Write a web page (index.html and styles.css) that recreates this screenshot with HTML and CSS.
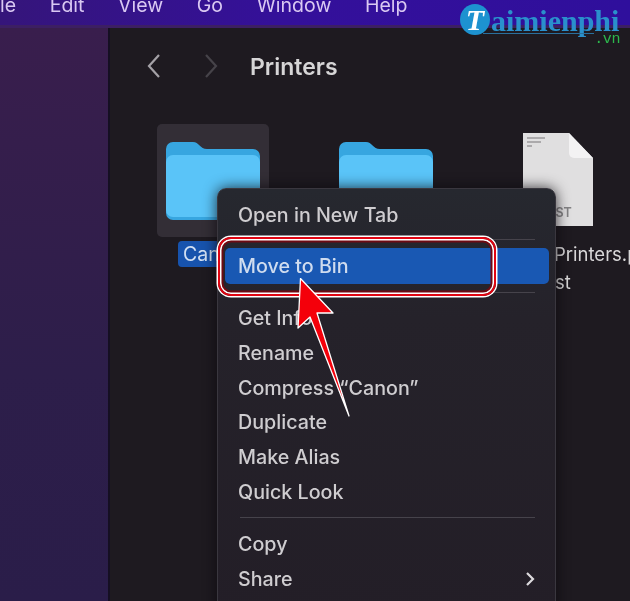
FILE: index.html
```html
<!DOCTYPE html>
<html lang="en">
<head>
<meta charset="utf-8">
<title>Printers</title>
<link rel="stylesheet" href="styles.css">
</head>
<body>
<div class="screen">
  <header class="menubar">
    <span class="m">le</span><span class="m">Edit</span><span class="m">View</span><span class="m">Go</span><span class="m">Window</span><span class="m">Help</span>
  </header>
  <div class="desktop">
    <aside class="sidebar"></aside>
    <main class="finder">
      <div class="toolbar">
        <svg class="nav" width="16" height="24" viewBox="0 0 16 24"><path d="M13 1 3 12l10 11" fill="none" stroke="#a4a1a6" stroke-width="2.2"/></svg>
        <svg class="nav nav-next" width="16" height="24" viewBox="0 0 16 24"><path d="M3 1l10 11L3 23" fill="none" stroke="#464349" stroke-width="2.2"/></svg>
        <h1 class="title">Printers</h1>
      </div>
      <div class="files">
        <div class="file file-a">
          <div class="thumb selected">
            <svg class="folder" width="94" height="78" viewBox="0 0 94 78"><path d="M0 7a7 7 0 0 1 7-7h20c6 0 7 7 14 7h46a7 7 0 0 1 7 7v57a7 7 0 0 1-7 7H7a7 7 0 0 1-7-7z" fill="#37a6e0"/><path d="M0 20a7 7 0 0 1 7-7h80a7 7 0 0 1 7 7v48a7 7 0 0 1-7 7H7a7 7 0 0 1-7-7z" fill="#5ac4f8"/></svg>
          </div>
          <span class="label">Can</span>
        </div>
        <div class="file file-b">
          <svg class="folder" width="94" height="78" viewBox="0 0 94 78"><path d="M0 7a7 7 0 0 1 7-7h20c6 0 7 7 14 7h46a7 7 0 0 1 7 7v57a7 7 0 0 1-7 7H7a7 7 0 0 1-7-7z" fill="#37a6e0"/><path d="M0 20a7 7 0 0 1 7-7h80a7 7 0 0 1 7 7v48a7 7 0 0 1-7 7H7a7 7 0 0 1-7-7z" fill="#5ac4f8"/></svg>
        </div>
        <div class="file file-c">
          <div class="doc">
            <svg width="72" height="93" viewBox="0 0 72 93"><path d="M1 0h46l24 25v68H1z" fill="#e0dfe0"/><path d="M47 0v20a5 5 0 0 0 5 5h19z" fill="#f3f2f3"/><path d="M5 5h18M5 9h14M5 13h5" stroke="#9a999b" stroke-width="1.5"/></svg>
            <span class="doc-tag">IST</span>
          </div>
          <span class="doc-name">Printers.p</span>
          <span class="doc-name doc-name-2">st</span>
        </div>
      </div>
    </main>
  </div>
  <div class="logo">
    <span class="logo-mark">T</span><span class="logo-text">aimienphi</span><span class="logo-vn">.vn</span>
  </div>
  <nav class="context">
    <div class="item item-first">Open in New Tab</div>
    <div class="sep"></div>
    <div class="item item-active">Move to Bin</div>
    <div class="sep"></div>
    <div class="item item-info">Get Info</div>
    <div class="item">Rename</div>
    <div class="item">Compress “Canon”</div>
    <div class="item">Duplicate</div>
    <div class="item">Make Alias</div>
    <div class="item">Quick Look</div>
    <div class="sep sep-wide"></div>
    <div class="item">Copy</div>
    <div class="item item-sub">Share
      <svg width="10" height="16" viewBox="0 0 10 16"><path d="M2 2l6 6-6 6" fill="none" stroke="#dcdadd" stroke-width="2.2"/></svg>
    </div>
  </nav>
  <div class="callout"></div>
  <svg class="arrow" width="70" height="140" viewBox="0 0 70 140"><path d="M7.5 .5 40 35H24L56 138 17 39 5 50z" fill="#f4000a" stroke="#fff" stroke-width="1.3" stroke-linejoin="round"/></svg>
</div>
</body>
</html>
```
FILE: styles.css
```css
* { box-sizing: border-box; }
html, body { margin: 0; padding: 0; }
body { background: #1e1a20; font-family: "Inter", "Liberation Sans", sans-serif; }
.screen { position: relative; width: 630px; height: 601px; overflow: hidden; display: flex; flex-direction: column; filter: blur(.45px); }

.menubar { height: 28px; flex: none; display: flex; gap: 33.6px; align-items: flex-start; background: linear-gradient(90deg, #35157a, #34109a 45%, #2f0f9c 100%); border-bottom: 3px solid #3c1f63; color: #d9c8f2; font-size: 19.5px; line-height: 11px; }
.m { display: block; }

.desktop { flex: 1; display: flex; min-height: 0; }
.sidebar { width: 110px; flex: none; background: linear-gradient(180deg, #391e4d, #2d1e4a 60%, #2a1d49); border-right: 2px solid #150f22; }
.finder { flex: 1; background: #1e1a20; }

.toolbar { display: flex; align-items: center; height: 76px; padding-left: 36px; }
.nav { flex: none; }
.nav-next { margin-left: 41px; }
.title { margin: 2px 0 0 31px; font-size: 23px; font-weight: 600; color: #d6d5d6; }

.files { position: relative; display: flex; padding-left: 47px; margin-top: 20px; }
.file { flex: none; }
.file-a { width: 182px; }
.thumb { width: 112px; height: 113px; border-radius: 5px; display: flex; justify-content: center; align-items: flex-start; padding-top: 18px; }
.selected { background: #332e36; }
.label { display: inline-block; margin: 4px 0 0 21px; padding: 0 6px 0 5px; height: 26px; background: #1753ad; border-radius: 4px; color: #d2e0f3; font-size: 19.5px; line-height: 26px; }
.file-b { width: 184px; padding-top: 18px; }
.file-c { width: 110px; margin-left: -1px; color: #d8d7d8; font-size: 18.5px; line-height: 27px; }
.doc { position: relative; width: 72px; height: 93px; margin-top: 9px; }
.doc-tag { position: absolute; left: 30px; bottom: 6px; color: #838284; font-size: 12.5px; line-height: 14px; font-weight: 600; }
.doc-name { display: block; margin-top: 15px; margin-left: 32px; }
.doc-name-2 { margin-top: 1px; margin-left: 33px; }

.logo { position: absolute; left: 460px; top: 4px; width: 161px; height: 42px; }
.logo-mark { position: absolute; left: 0; top: 0; width: 30px; height: 31px; border-radius: 50%; background: #1d92d0; color: #fff; font-family: "Liberation Serif", serif; font-style: italic; font-weight: 700; font-size: 30px; line-height: 31px; text-align: center; }
.logo-text { position: absolute; left: 31px; top: 4px; color: #2a90cc; font-family: "Liberation Serif", serif; font-weight: 700; font-size: 30px; line-height: 26px; }
.logo-text::after { content: ""; position: absolute; left: -8px; right: 25px; top: 25px; height: 1px; background: #2a6f9c; }
.logo-vn { position: absolute; right: 1px; top: 30px; color: #2cb84c; font-family: "Liberation Mono", monospace; font-size: 15px; line-height: 12px; letter-spacing: -.4px; }

.context { position: absolute; left: 217px; top: 188px; width: 339px; height: 430px; padding: 9px 6px 0 7px; background: linear-gradient(180deg, #26282f 0, #25222a 30%, #231e27 100%); border: 1px solid #3a373f; border-radius: 9px; box-shadow: 0 0 14px #0b090dcc; }
.item { height: 34.8px; padding-left: 13px; color: #cfcdd0; font-size: 19.7px; font-weight: 500; line-height: 34.8px; }
.item-first { height: 34px; }
.item-active { height: 36px; background: #1958b3; border-radius: 5px; color: #cfdcef; line-height: 37px; }
.item-info { margin-top: 1px; }
.item-sub { display: flex; justify-content: space-between; align-items: center; padding-right: 14px; }
.sep { height: 1px; margin: 7px 14px 8px 15px; background: #46434b; }
.item-active + .sep { margin-top: 8px; margin-bottom: 8px; }
.sep-wide { margin-top: 7px; margin-bottom: 9px; }

.callout { position: absolute; left: 218px; top: 237px; width: 278px; height: 59px; border: 2.5px solid #e00512; border-radius: 13px; box-shadow: 0 0 0 1.5px #fff inset, 0 0 0 1.5px #fff, inset 0 0 0 3.5px #6e0a12; }
.arrow { position: absolute; left: 293px; top: 278px; }
```
